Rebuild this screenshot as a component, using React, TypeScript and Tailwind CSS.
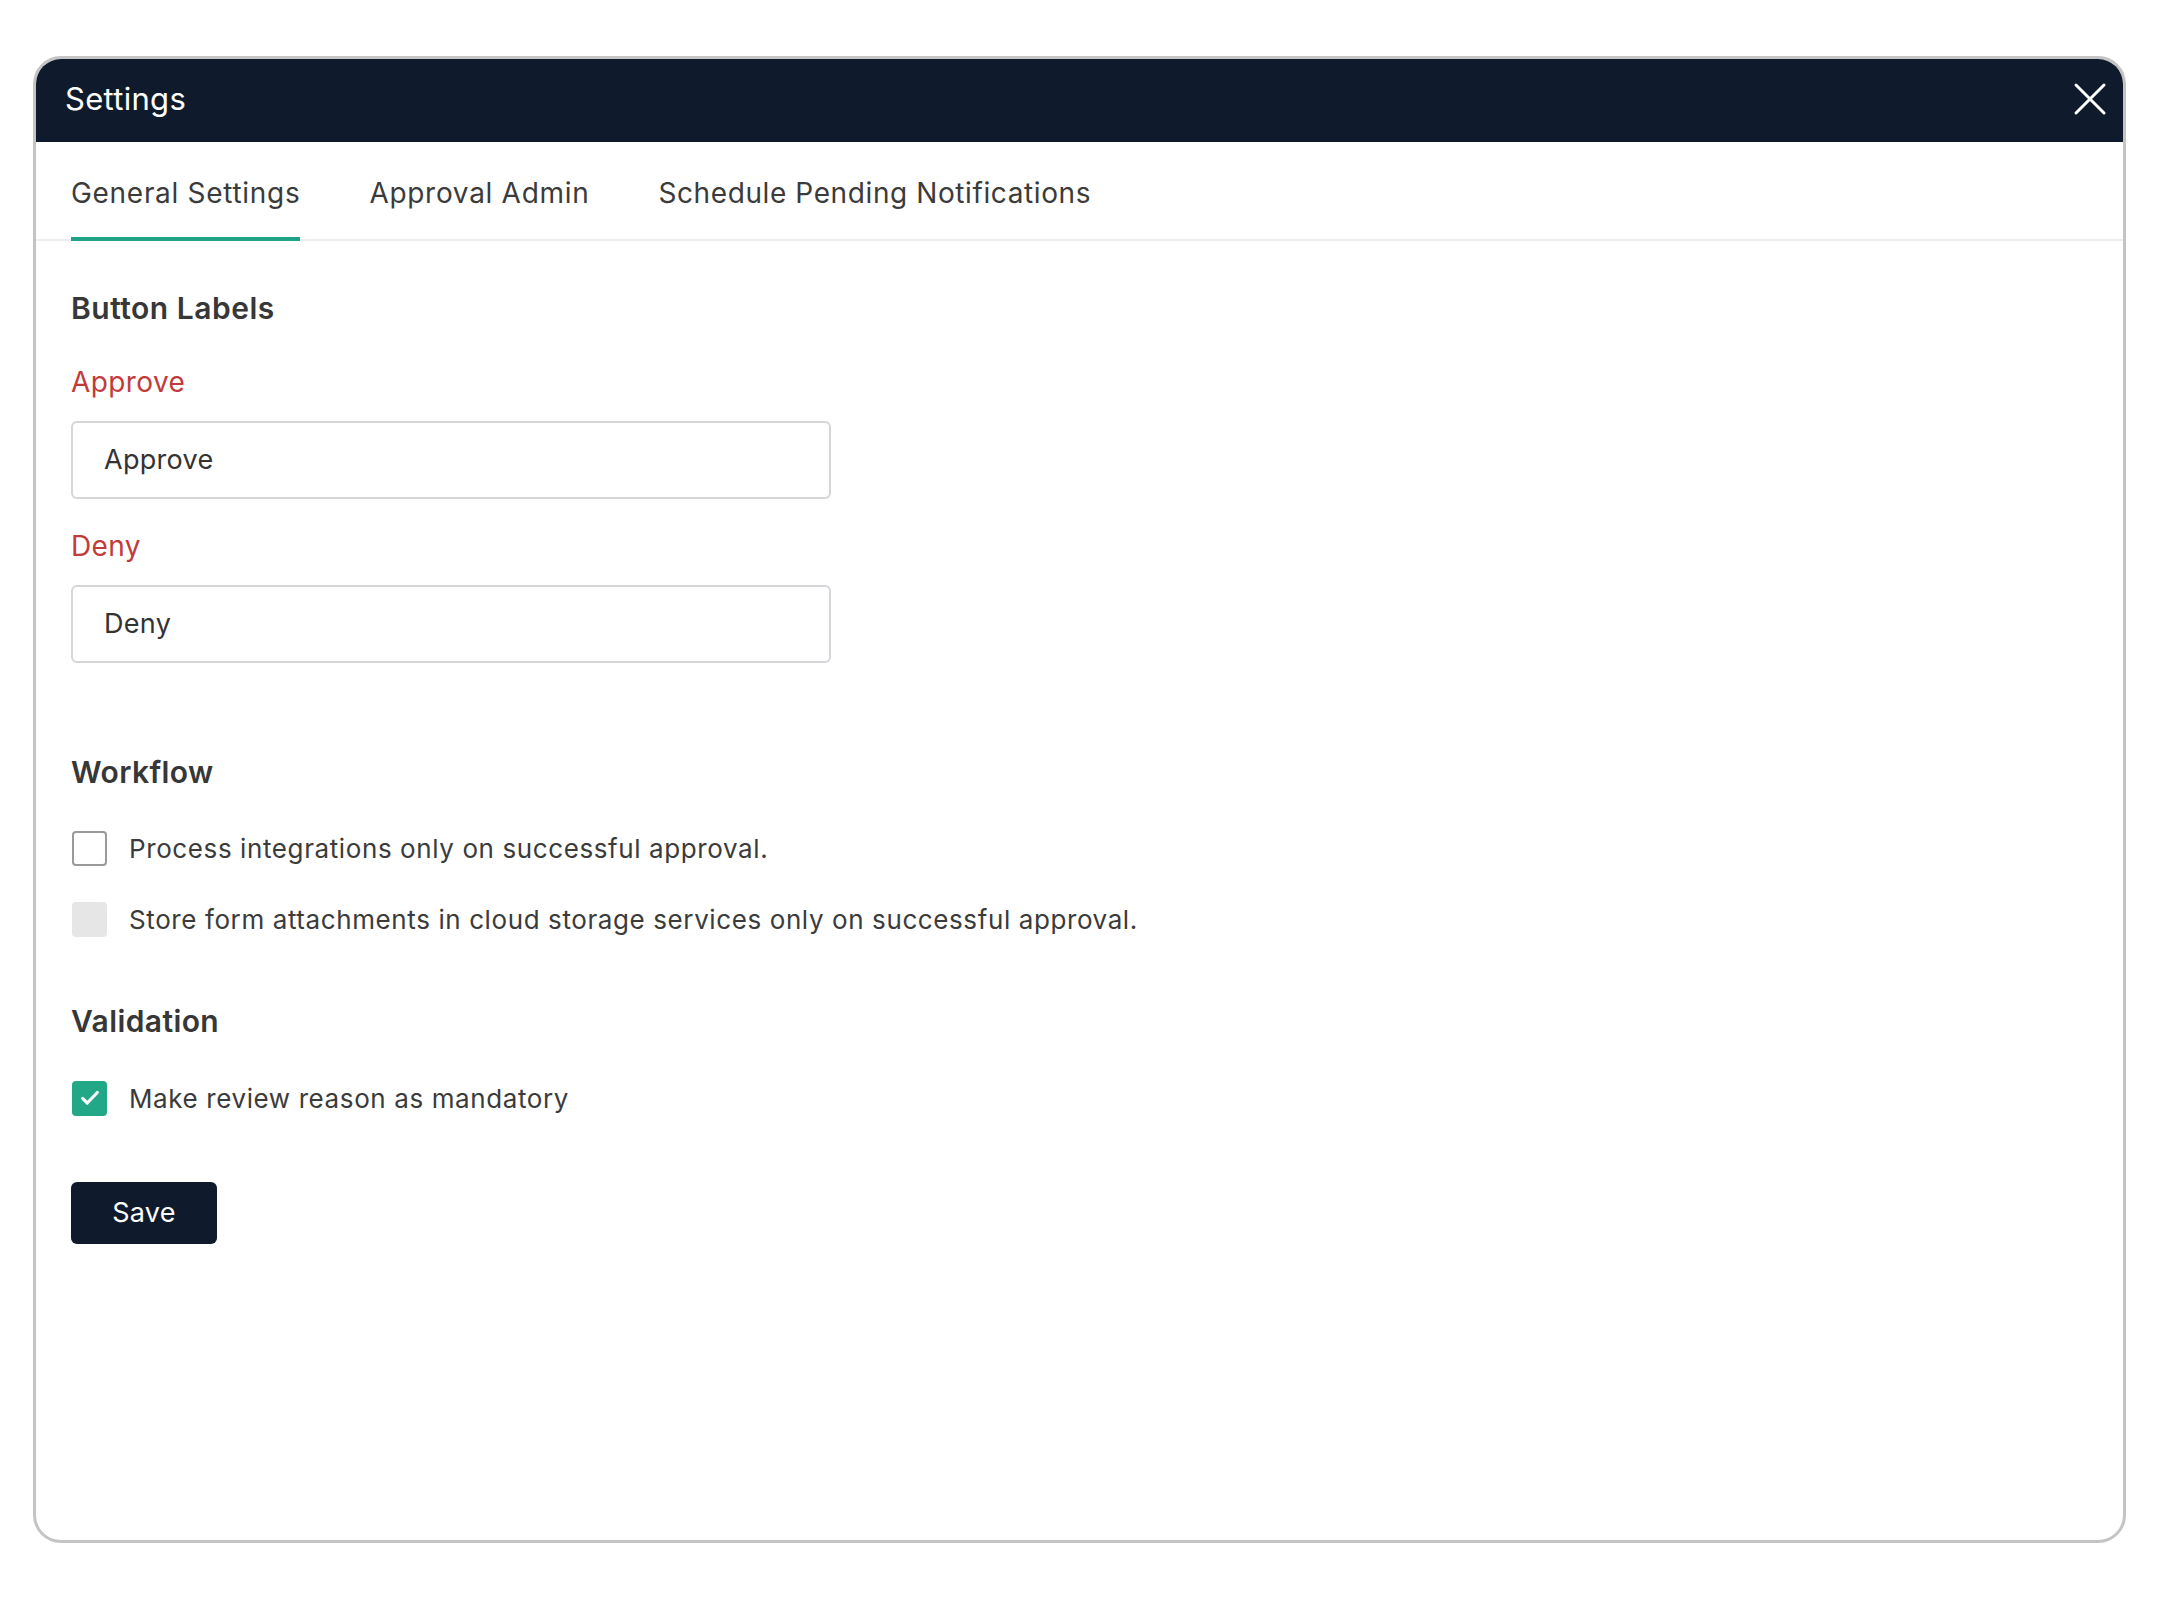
import React from "react";

function Checkbox({ state }: { state: "empty" | "disabled" | "checked" }) {
  if (state === "checked") {
    return (
      <div className="w-[35px] h-[35px] rounded-[4px] bg-[#22a887] flex items-center justify-center shrink-0">
        <svg width="22" height="22" viewBox="0 0 24 24" fill="none">
          <path d="M4 12.5l5 5L20 6" stroke="#ffffff" strokeWidth="3.4" strokeLinecap="round" strokeLinejoin="round" />
        </svg>
      </div>
    );
  }
  if (state === "disabled") {
    return <div className="w-[35px] h-[35px] rounded-[4px] bg-[#e6e6e6] shrink-0" />;
  }
  return <div className="w-[35px] h-[35px] rounded-[4px] border-2 border-[#9a9a9a] bg-white shrink-0" />;
}

export default function App() {
  return (
    <div className="w-[2159px] h-[1598px] bg-white pt-[56px] px-[33px] font-['Inter','Noto_Sans',sans-serif] text-[#3b3b3b]">
      <div className="h-[1487px] rounded-[28px] border-[3px] border-[#c4c4c4] overflow-hidden bg-white flex flex-col">
        <div className="h-[83px] bg-[#0f1b2c] flex items-center justify-between pl-[29px] pr-[16px] pb-[4px] shrink-0">
          <span className="text-white text-[31px] leading-none tracking-[0.3px]">Settings</span>
          <svg width="34" height="34" viewBox="0 0 34 34" fill="none">
            <path d="M3 3L31 31M31 3L3 31" stroke="#ffffff" strokeWidth="3" strokeLinecap="round" />
          </svg>
        </div>
        <div className="flex gap-[69px] pl-[35px] border-b-2 border-[#eeeeee] shrink-0">
          <div className="pt-[33px] pb-[26px] text-[28px] leading-[36px] tracking-[0.7px] text-[#3b3b3b] border-b-4 border-[#1fa386] -mb-[2px]">
            General Settings
          </div>
          <div className="pt-[33px] pb-[26px] text-[28px] leading-[36px] tracking-[0.7px] text-[#3b3b3b]">
            Approval Admin
          </div>
          <div className="pt-[33px] pb-[26px] text-[28px] leading-[36px] tracking-[0.6px] text-[#3b3b3b]">
            Schedule Pending Notifications
          </div>
        </div>
        <div className="flex flex-col pl-[35px] pt-[49px]">
          <div className="text-[30px] leading-[36px] font-semibold tracking-[0.5px] text-[#373737]">Button Labels</div>
          <div className="mt-[38px] text-[28px] leading-[36px] tracking-[0.4px] text-[#c23b3b]">Approve</div>
          <div className="mt-[21px] w-[760px] h-[78px] rounded-[6px] border-2 border-[#d6d6da] flex items-center pl-[31px] text-[27px] tracking-[0.3px] text-[#333333]">
            Approve
          </div>
          <div className="mt-[29px] text-[28px] leading-[36px] tracking-[0.4px] text-[#c23b3b]">Deny</div>
          <div className="mt-[21px] w-[760px] h-[78px] rounded-[6px] border-2 border-[#d6d6da] flex items-center pl-[31px] text-[27px] tracking-[0.3px] text-[#333333]">
            Deny
          </div>
          <div className="mt-[91px] text-[30px] leading-[36px] font-semibold tracking-[0.4px] text-[#373737]">Workflow</div>
          <div className="mt-[40px] flex items-center gap-[22px] h-[36px] pl-[1px]">
            <Checkbox state="empty" />
            <span className="text-[26px] tracking-[0.6px] text-[#3b3b3b]">Process integrations only on successful approval.</span>
          </div>
          <div className="mt-[35px] flex items-center gap-[22px] h-[36px] pl-[1px]">
            <Checkbox state="disabled" />
            <span className="text-[26px] tracking-[0.6px] text-[#3b3b3b]">
              Store form attachments in cloud storage services only on successful approval.
            </span>
          </div>
          <div className="mt-[66px] text-[30px] leading-[36px] font-semibold tracking-[0.4px] text-[#373737]">Validation</div>
          <div className="mt-[41px] flex items-center gap-[22px] h-[36px] pl-[1px]">
            <Checkbox state="checked" />
            <span className="text-[26px] tracking-[0.6px] text-[#3b3b3b]">Make review reason as mandatory</span>
          </div>
          <div className="mt-[66px]">
            <button className="w-[146px] h-[62px] rounded-[6px] bg-[#0f1b2c] text-white text-[27px] tracking-[0.3px] flex items-center justify-center">
              Save
            </button>
          </div>
        </div>
      </div>
    </div>
  );
}
